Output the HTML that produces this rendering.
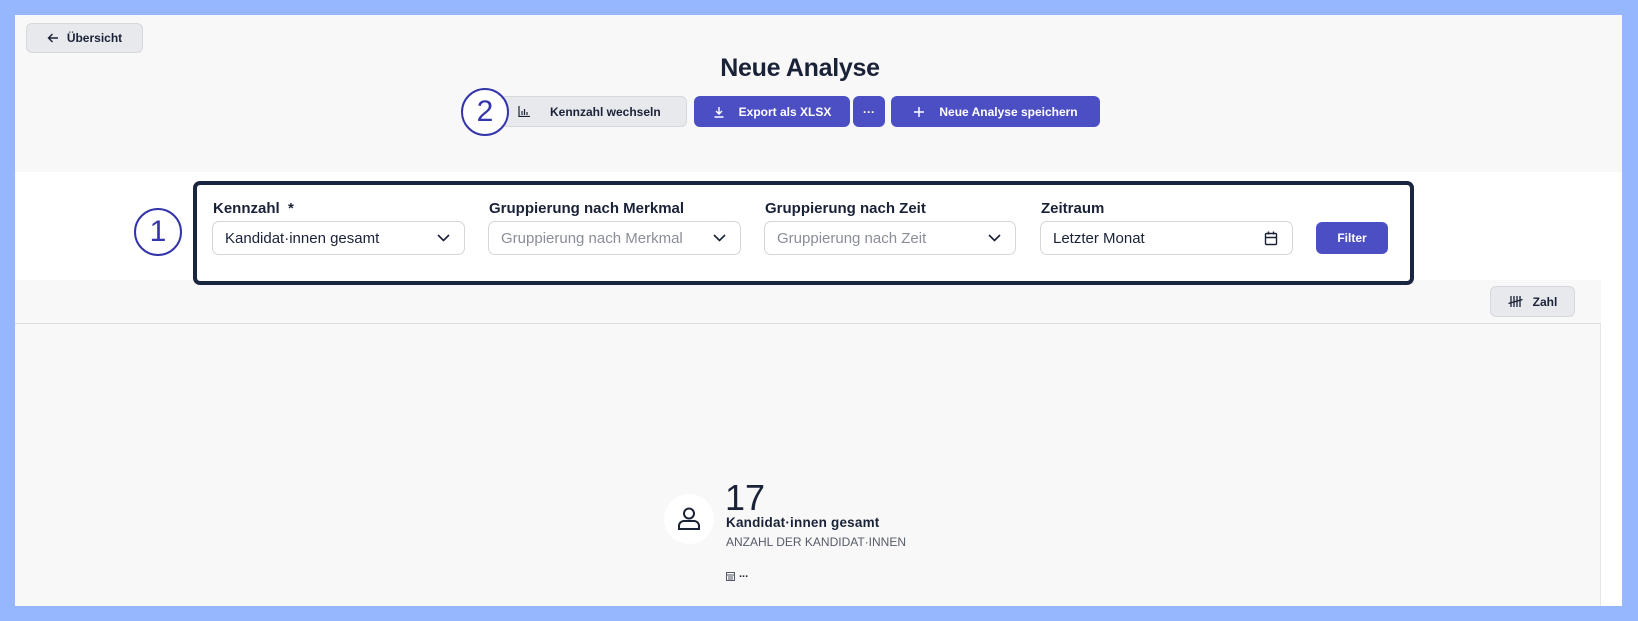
<!DOCTYPE html>
<html><head><meta charset="utf-8"><style>
*{box-sizing:border-box;margin:0;padding:0}
body{width:1638px;height:621px;background:#96b7fe;font-family:"Liberation Sans",sans-serif;color:#1a2238;position:relative;overflow:hidden}
.a{position:absolute}
.page{left:15px;top:15px;width:1607px;height:591px;background:#f8f8f8;overflow:hidden}
.btn{position:absolute;border-radius:6px;font-size:12px;font-weight:bold;display:flex;align-items:center;justify-content:center;gap:8px}
.g{background:#e8e9ec;border:1px solid #d6d8dd;color:#1a2238}
.p{background:#4c4ec3;color:#fff}
.lbl{position:absolute;top:200px;font-size:15px;font-weight:bold}
.sel{position:absolute;top:221px;height:34px;border:1px solid #d4d6db;border-radius:7px;background:#fff;font-size:15px;padding-left:12px;display:flex;align-items:center;justify-content:space-between;padding-right:14px}
.circ{position:absolute;border:2px solid #3435a8;border-radius:50%;background:#fff;color:#3435a8;font-size:30px;display:flex;align-items:center;justify-content:center}
</style></head><body>
<div class="a page"></div>
<div class="a" style="left:15px;top:172px;width:1607px;height:108px;background:#fff"></div>
<div class="a" style="left:1601px;top:280px;width:21px;height:326px;background:#fff"></div>
<div class="a" style="left:15px;top:323px;width:1586px;height:1px;background:#dcdde0"></div>
<div class="a" style="left:1600px;top:324px;width:1px;height:282px;background:#e6e7ea"></div>

<div class="btn g" style="left:26px;top:23px;width:117px;height:30px"><svg width="12" height="12" viewBox="0 0 12 12" fill="none" stroke="#1a2238" stroke-width="1.4"><path d="M11 6H1.5M5.5 2L1.5 6l4 4"/></svg>Übersicht</div>
<div class="a" style="left:600px;width:400px;top:54px;text-align:center;font-size:25px;font-weight:bold;color:#1a2238;letter-spacing:-0.3px">Neue Analyse</div>

<div class="btn g" style="left:500px;top:96px;width:187px;height:31px;justify-content:flex-start;padding-left:17px;gap:20px"><svg width="12" height="11" viewBox="0 0 12 11" fill="none" stroke="#1a2238" stroke-width="1.2"><path d="M1 0v10.5h11M4 9V5M6.5 9V3M9 9V6"/></svg>Kennzahl wechseln</div>
<div class="circ" style="left:461px;top:88px;width:48px;height:48px">2</div>
<div class="btn p" style="left:694px;top:96px;width:156px;height:31px;gap:14px"><svg width="12" height="12" viewBox="0 0 12 12" fill="none" stroke="#fff" stroke-width="1.4"><path d="M6 1v7M3 5l3 3 3-3M1.5 11h9"/></svg>Export als XLSX</div>
<div class="btn p" style="left:853px;top:96px;width:32px;height:31px">···</div>
<div class="btn p" style="left:891px;top:96px;width:209px;height:31px;gap:14px"><svg width="12" height="12" viewBox="0 0 12 12" fill="none" stroke="#fff" stroke-width="1.5"><path d="M6 1v10M1 6h10"/></svg>Neue Analyse speichern</div>

<div class="a" style="left:193px;top:181px;width:1221px;height:104px;border:4px solid #1b2540;border-radius:7px;background:#fff"></div>
<div class="circ" style="left:134px;top:208px;width:48px;height:48px">1</div>

<div class="lbl" style="left:213px">Kennzahl&nbsp; *</div>
<div class="lbl" style="left:489px">Gruppierung nach Merkmal</div>
<div class="lbl" style="left:765px">Gruppierung nach Zeit</div>
<div class="lbl" style="left:1041px">Zeitraum</div>
<div class="sel" style="left:212px;width:253px">Kandidat·innen gesamt<svg width="13" height="8" viewBox="0 0 13 8" fill="none" stroke="#1a2238" stroke-width="1.6"><path d="M1 1l5.5 5.5L12 1"/></svg></div>
<div class="sel" style="left:488px;width:253px;color:#8a8e98">Gruppierung nach Merkmal<svg width="13" height="8" viewBox="0 0 13 8" fill="none" stroke="#1a2238" stroke-width="1.6"><path d="M1 1l5.5 5.5L12 1"/></svg></div>
<div class="sel" style="left:764px;width:252px;color:#8a8e98">Gruppierung nach Zeit<svg width="13" height="8" viewBox="0 0 13 8" fill="none" stroke="#1a2238" stroke-width="1.6"><path d="M1 1l5.5 5.5L12 1"/></svg></div>
<div class="sel" style="left:1040px;width:253px">Letzter Monat<svg width="14" height="15" viewBox="0 0 14 15" fill="none" stroke="#1a2238" stroke-width="1.4"><rect x="1.5" y="2.5" width="11" height="11" rx="1"/><path d="M1.5 6.5h11M4.5 0.5v3M9.5 0.5v3"/></svg></div>
<div class="btn p" style="left:1316px;top:222px;width:72px;height:32px">Filter</div>

<div class="btn g" style="left:1490px;top:286px;width:85px;height:31px;gap:10px"><svg width="15" height="13" viewBox="0 0 15 13" fill="none" stroke="#1a2238" stroke-width="1.3"><path d="M3 1v11M6 1v11M9 1v11M12 1v11M0.5 8.5L14.5 4.5"/></svg>Zahl</div>

<div class="a" style="left:664px;top:494px;width:50px;height:50px;border-radius:50%;background:#fff"></div>
<svg class="a" style="left:674px;top:504px" width="30" height="30" viewBox="0 0 30 30" fill="none" stroke="#1a2238" stroke-width="2"><circle cx="15" cy="9.5" r="5"/><path d="M5 25v-3a5 5 0 0 1 5-5h10a5 5 0 0 1 5 5v3z"/></svg>
<div class="a" style="left:725px;top:480px;font-size:36px;line-height:36px">17</div>
<div class="a" style="left:726px;top:515px;font-size:13.5px;font-weight:bold;letter-spacing:0.2px">Kandidat·innen gesamt</div>
<div class="a" style="left:726px;top:535px;font-size:12px;color:#555b68">ANZAHL DER KANDIDAT·INNEN</div>
<svg class="a" style="left:726px;top:572px" width="9" height="9" viewBox="0 0 9 9" fill="none" stroke="#555b68" stroke-width="1"><rect x="0.5" y="0.5" width="8" height="8"/><path d="M0.5 3h8M2 5h5M2 7h5"/></svg>
<div class="a" style="left:739px;top:568px;font-size:11px;font-weight:bold">...</div>
</body></html>
